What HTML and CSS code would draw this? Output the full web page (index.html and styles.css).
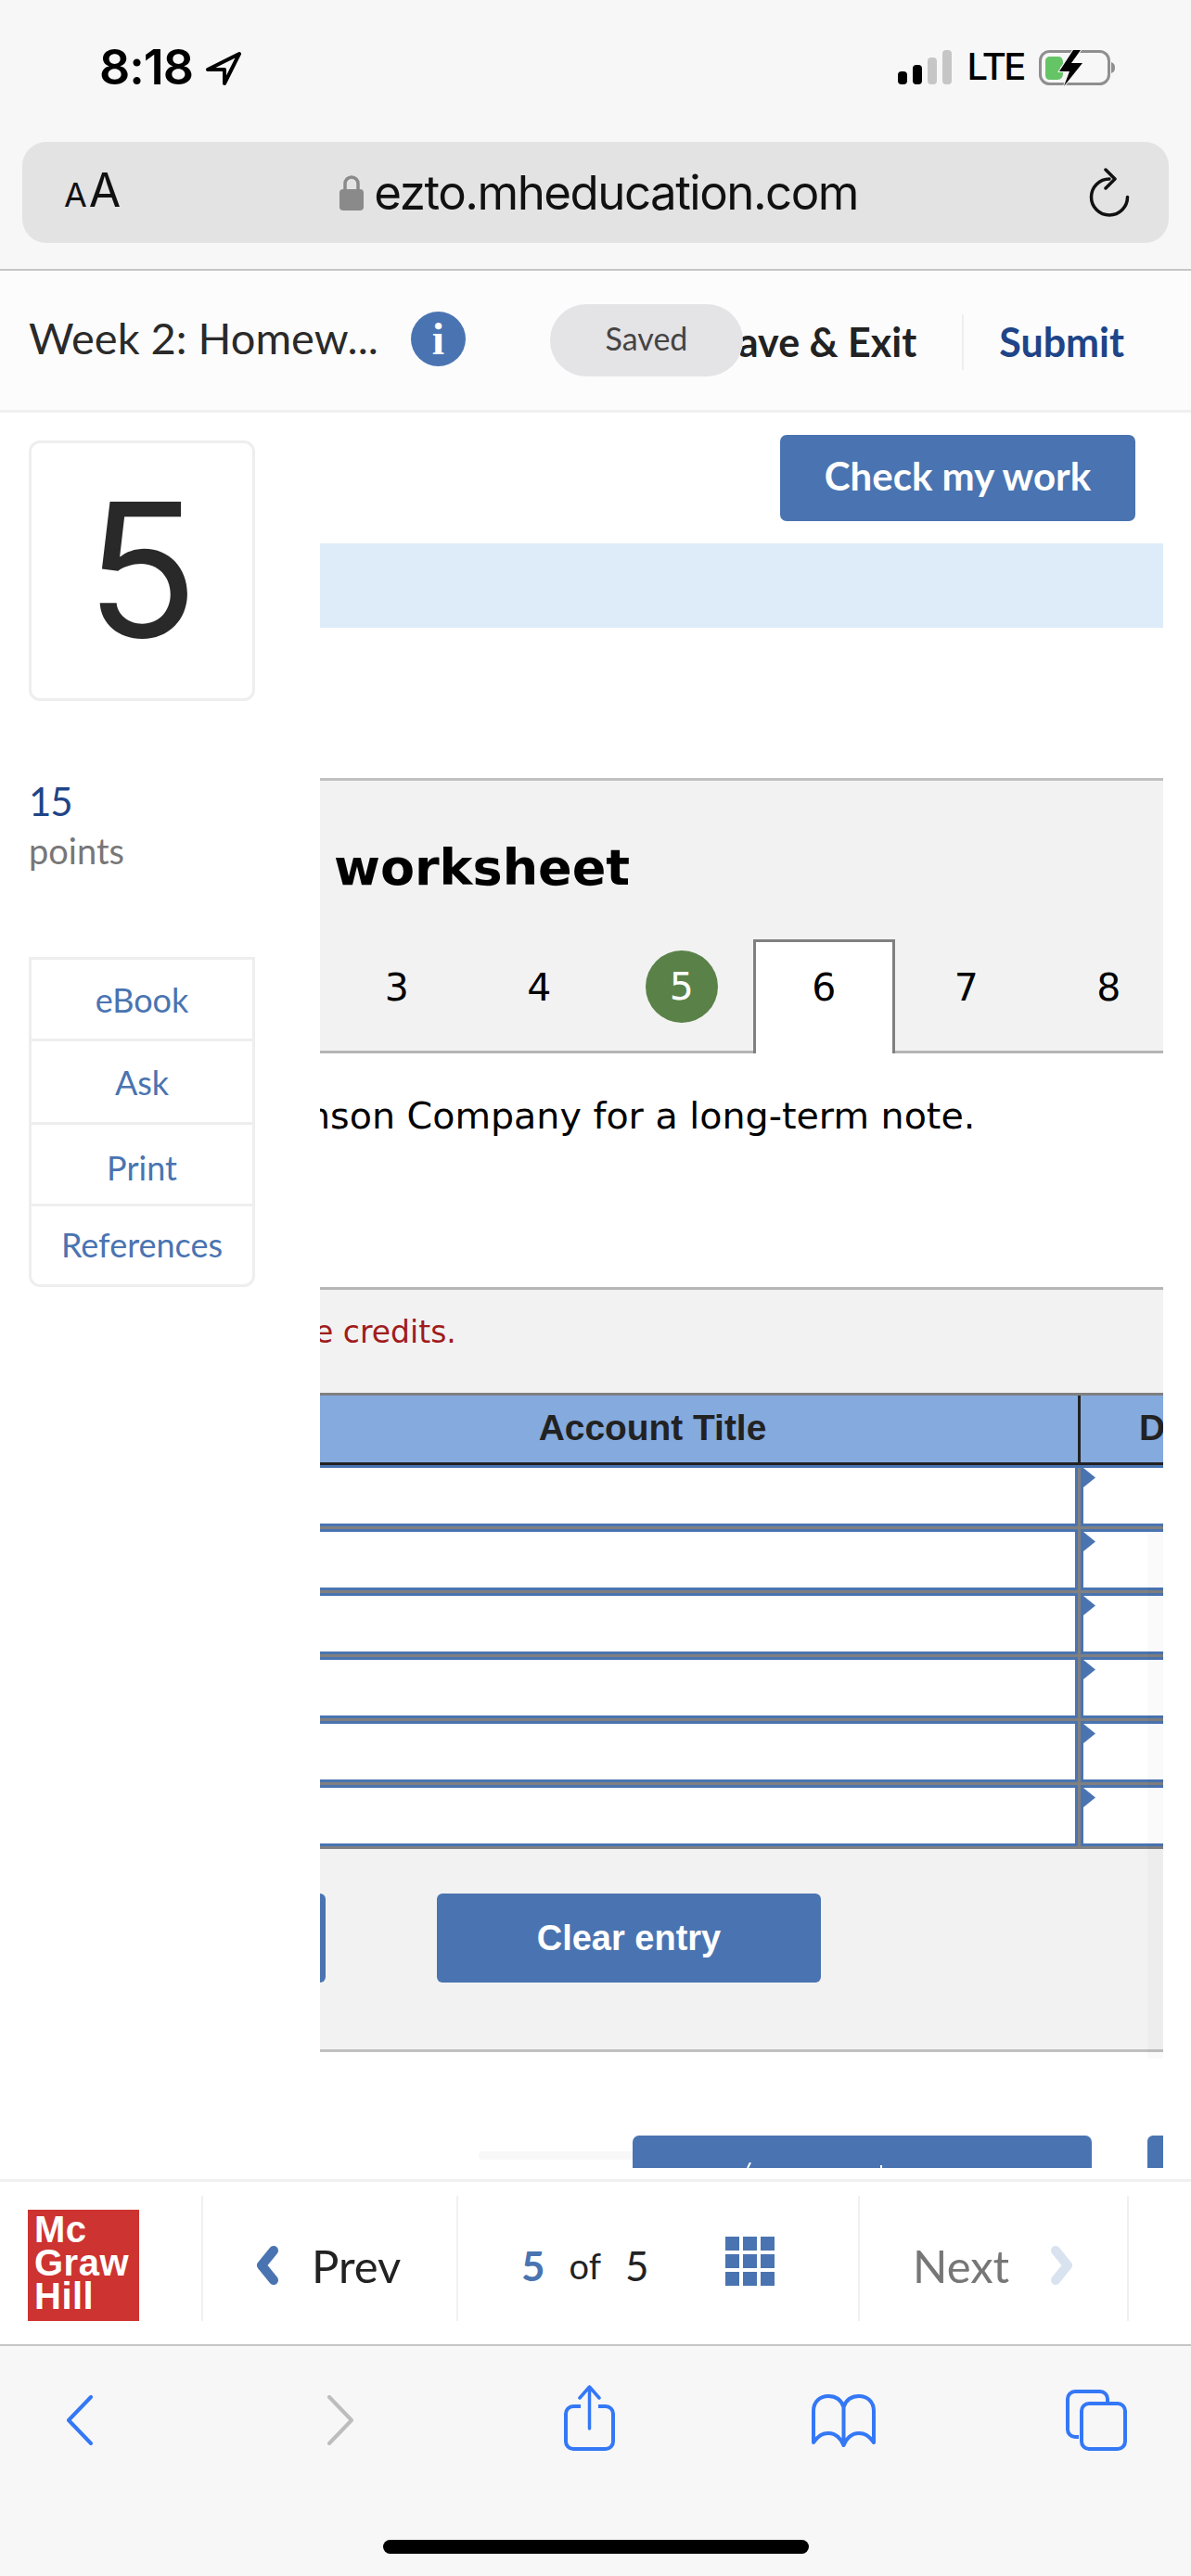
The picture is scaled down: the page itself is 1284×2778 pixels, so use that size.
FILE: index.html
```html
<!DOCTYPE html>
<html lang="en">
<head>
<meta charset="utf-8">
<title>Week 2: Homework</title>
<link rel="stylesheet" href="styles.css">
</head>
<body>
<div class="phone">
  <div class="chrome-top">
    <div class="status">
      <span class="time">8:18</span>
      <svg class="loc" viewBox="0 0 40 37"><path d="M37 3 3 20h18v15z" fill="none" stroke="#000" stroke-width="4" stroke-linejoin="round"/></svg>
      <div class="status-right">
        <div class="signal"><i class="b1"></i><i class="b2"></i><i class="b3"></i><i class="b4"></i></div>
        <span class="lte">LTE</span>
        <svg class="battery" viewBox="0 0 82 40">
          <rect x="1.500" y="2.500" width="74" height="35" rx="10" fill="none" stroke="#8f8f8f" stroke-width="3"/>
          <path d="M12 8h9c4 0 5 3 5 7 0 3-3 4-3 5 0 2 3 3 3 6 0 4-2 7-6 7h-8c-3 0-5-2-5-5V13c0-3 2-5 5-5z" fill="#65c466"/>
          <path d="M37 1 22 24h11l-6 16 20-25H35l10-14z" fill="#000" stroke="#f7f7f7" stroke-width="2" paint-order="stroke"/>
          <path d="M78 14c3 1 4 3 4 6s-1 5-4 6z" fill="#8f8f8f"/>
        </svg>
      </div>
    </div>
    <div class="urlbar">
      <span class="aa"><small>A</small>A</span>
      <span class="url">
        <svg class="lock" viewBox="0 0 26 38"><path d="M6 16V9a7 7 0 0 1 14 0v7" fill="none" stroke="#8a8a8a" stroke-width="3.500"/><rect y="15" width="26" height="23" rx="4" fill="#8a8a8a"/></svg>
        <span class="host">ezto.mheducation.com</span>
      </span>
      <svg class="reload" viewBox="0 0 44 54"><path d="M22 12A19.500 19.500 0 1 0 41.500 31.500" fill="none" stroke="#111" stroke-width="3.500" stroke-linecap="round"/><path d="M18 2l10 10-10 10" fill="none" stroke="#111" stroke-width="3.500" stroke-linecap="round" stroke-linejoin="round"/></svg>
    </div>
  </div>

  <header class="app-head">
    <span class="title">Week 2: Homew...</span>
    <span class="info">i</span>
    <span class="save">Save &amp; Exit</span>
    <span class="submit">Submit</span>
    <span class="saved-pill">Saved</span>
  </header>

  <main class="main">
    <aside class="side">
      <div class="qcard">5</div>
      <div class="pts"><b>15</b><span>points</span></div>
      <nav class="links">
        <a>eBook</a>
        <a>Ask</a>
        <a class="print">Print</a>
        <a>References</a>
      </nav>
    </aside>

    <section class="content">
      <div class="check-row"><button class="btn check">Check my work</button></div>
      <div class="band"></div>

      <div class="tabs-panel">
        <h2 class="ws-title">worksheet</h2>
        <div class="tabs">
          <span class="tab">3</span>
          <span class="tab">4</span>
          <span class="tab"><em class="done">5</em></span>
          <span class="tab active">6</span>
          <span class="tab">7</span>
          <span class="tab">8</span>
        </div>
      </div>

      <p class="prompt">nson Company for a long-term note.</p>

      <div class="entry-panel">
        <p class="note">e credits.</p>
        <div class="thead">
          <div class="th-title">Account Title</div>
          <div class="th-debit">Debit</div>
        </div>
        <div class="row"><div class="c-title"></div><div class="c-rule"></div><div class="c-debit"><i class="flag"></i></div></div><div class="line"></div>
        <div class="row"><div class="c-title"></div><div class="c-rule"></div><div class="c-debit"><i class="flag"></i></div></div><div class="line"></div>
        <div class="row"><div class="c-title"></div><div class="c-rule"></div><div class="c-debit"><i class="flag"></i></div></div><div class="line"></div>
        <div class="row"><div class="c-title"></div><div class="c-rule"></div><div class="c-debit"><i class="flag"></i></div></div><div class="line"></div>
        <div class="row"><div class="c-title"></div><div class="c-rule"></div><div class="c-debit"><i class="flag"></i></div></div><div class="line"></div>
        <div class="row"><div class="c-title"></div><div class="c-rule"></div><div class="c-debit"><i class="flag"></i></div></div><div class="line last"></div>
        <div class="entry-actions">
          <span class="btn stub"></span>
          <button class="btn clear">Clear entry</button>
        </div>
      </div>

      <div class="scroll-shade"></div>

      <div class="pager-clip">
        <span class="faint"></span>
        <span class="btn big"><svg class="tick" viewBox="0 0 160 6"><path d="M5 0 2 6M146 3v3" fill="none" stroke="#fff" stroke-width="2"/></svg></span>
        <span class="btn stub2"></span>
      </div>
    </section>
  </main>

  <footer class="foot">
    <div class="logo"><span>Mc</span><span>Graw</span><span>Hill</span></div>
    <div class="f-cell f-prev">
      <svg class="chev" viewBox="0 0 26 42"><path d="M20 5 7 21l13 16" fill="none" stroke="#4a74b1" stroke-width="10" stroke-linecap="round" stroke-linejoin="round"/></svg>
      <span>Prev</span>
    </div>
    <div class="f-cell f-count">
      <b>5</b><span class="of">of</span><span>5</span>
      <div class="grid-ic"><i></i><i></i><i></i><i></i><i></i><i></i><i></i><i></i><i></i></div>
    </div>
    <div class="f-cell f-next">
      <span>Next</span>
      <svg class="chev" viewBox="0 0 26 42"><path d="M6 5l13 16L6 37" fill="none" stroke="#d9e3f0" stroke-width="10" stroke-linecap="round" stroke-linejoin="round"/></svg>
    </div>
  </footer>

  <div class="toolbar">
    <div class="tools">
      <svg class="t-back" viewBox="0 0 30 54"><path d="M27 2 3 27l24 25" fill="none" stroke="#3478f6" stroke-width="4" stroke-linecap="round" stroke-linejoin="round"/></svg>
      <svg class="t-fwd" viewBox="0 0 30 54"><path d="M3 2l24 25L3 52" fill="none" stroke="#bdbdbd" stroke-width="4" stroke-linecap="round" stroke-linejoin="round"/></svg>
      <svg class="t-share" viewBox="0 0 55 71"><path d="M18 23H10a8 8 0 0 0-8 8v30a8 8 0 0 0 8 8h35a8 8 0 0 0 8-8V31a8 8 0 0 0-8-8h-8" fill="none" stroke="#3478f6" stroke-width="4"/><path d="M27.500 2v45M17 14 27.500 2 38 14" fill="none" stroke="#3478f6" stroke-width="3.500" stroke-linecap="round" stroke-linejoin="round"/></svg>
      <svg class="t-book" viewBox="0 0 69 57"><path d="M34.500 14C32 6 26 2 18 2 9 2 2 8 2 18v34c6-8 10-10 16-10 8 0 14 6 16.500 13C37 48 43 42 51 42c6 0 10 2 16 10V18C67 8 60 2 51 2 43 2 37 6 34.500 14v41" fill="none" stroke="#3478f6" stroke-width="4" stroke-linejoin="round"/></svg>
      <svg class="t-tabs" viewBox="0 0 66 66"><path d="M14 51H10a8 8 0 0 1-8-8V10a8 8 0 0 1 8-8h27a8 8 0 0 1 8 8v4" fill="none" stroke="#3478f6" stroke-width="4"/><rect x="17" y="15" width="47" height="49" rx="8" fill="none" stroke="#3478f6" stroke-width="4"/></svg>
    </div>
    <div class="home"></div>
  </div>
</div>
</body>
</html>
```
FILE: styles.css
```css
* { box-sizing: border-box; }
html, body { margin: 0; padding: 0; background: #fff; }
.phone { width: 1284px; height: 2778px; overflow: hidden; font-family: "Lato", "Liberation Sans", sans-serif; display: flex; flex-direction: column; }

/* browser chrome */
.chrome-top { height: 292px; background: #f7f7f7; border-bottom: 2px solid #c6c6c6; padding: 0 24px; }
.status { height: 153px; display: flex; align-items: flex-start; padding-top: 47px; position: relative; }
.time { margin-left: 83px; font: 600 52px/52px "Inter", sans-serif; color: #000; letter-spacing: -1px; }
.loc { width: 40px; height: 37px; margin: 8px 0 0 13px; }
.status-right { margin-left: auto; margin-top: 6px; display: flex; align-items: flex-end; padding-right: 58px; }
.signal { display: flex; align-items: flex-end; gap: 6px; height: 37px; }
.signal i { display: block; width: 10px; border-radius: 4px; background: #000; }
.signal .b1 { height: 14px; } .signal .b2 { height: 21px; }
.signal .b3 { height: 29px; background: #c6c6c6; } .signal .b4 { height: 37px; background: #c6c6c6; }
.lte { font: 500 40px/38px "Inter", sans-serif; margin-left: 16px; color: #000; letter-spacing: -2.500px; }
.battery { width: 82px; height: 40px; margin-left: 16px; margin-bottom: -2px; }

.urlbar { height: 109px; background: #e3e3e3; border-radius: 26px; display: flex; align-items: center; padding: 0 42px 0 45px; position: relative; }
.aa { font: 400 50px/56px "Inter", sans-serif; color: #111; }
.aa small { font-size: 36px; margin-right: 2px; }
.url { display: flex; align-items: center; margin-left: 236px; }
.lock { width: 26px; height: 38px; margin-right: 11px; }
.host { font: 400 51px/56px "Inter", sans-serif; color: #111; letter-spacing: -1.500px; }
.reload { width: 44px; height: 54px; margin-left: auto; }

/* app header */
.app-head { height: 153px; background: #fcfcfc; border-bottom: 3px solid #f0f0f0; display: flex; align-items: center; position: relative; padding: 0 72px 0 31px; }
.title { font-size: 47px; color: #2a2a2a; margin-top: -6px; }
.info { width: 59px; height: 59px; border-radius: 50%; background: #4a74b1; color: #fff; font: 700 48px/59px "Liberation Serif", serif; text-align: center; margin: -3px 0 0 35px; }
.save { margin-left: auto; font-size: 43px; font-weight: 700; color: #222; padding-right: 49px; border-right: 2px solid #eee; line-height: 60px; margin-top: 3px; }
.submit { font-size: 43px; font-weight: 700; color: #1f4488; margin-left: 38px; margin-top: 3px; }
.saved-pill { position: absolute; left: 593px; top: 36px; width: 208px; height: 78px; border-radius: 39px; background: #e4e3e6; color: #444; font-size: 34px; line-height: 74px; text-align: center; }

/* main */
.main { height: 1905px; background: #fff; display: flex; overflow: hidden; }
.side { width: 345px; flex: none; padding: 30px 0 0 31px; }
.qcard { width: 244px; height: 281px; border: 3px solid #eee; border-radius: 12px; font: 400 200px/272px "Inter", sans-serif; text-align: center; color: #292929; }
.pts { margin-top: 84px; display: flex; flex-direction: column; }
.pts b { font-weight: 400; font-size: 42px; line-height: 48px; color: #1f4488; letter-spacing: -1px; }
.pts span { font-size: 38px; line-height: 46px; color: #777; margin-top: 6px; }
.links { margin-top: 92px; width: 244px; display: flex; flex-direction: column; border: 3px solid #eee; border-radius: 0 0 12px 12px; }
.links a { height: 88px; display: flex; align-items: center; justify-content: center; color: #4a74b1; font-size: 36px; border-bottom: 3px solid #eee; }
.links a:nth-child(2) { height: 90px; }
.links a.print { height: 88px; padding-top: 6px; }
.links a:last-child { height: 84px; border-bottom: 0; padding-bottom: 2px; }

.content { width: 909px; flex: none; position: relative; overflow: hidden; font-family: "DejaVu Sans", sans-serif; }
.btn { display: block; background: #4a74b1; border: 0; border-radius: 7px; color: #fff; font-weight: 700; padding: 0; }
.check-row { padding: 24px 30px 0 0; display: flex; justify-content: flex-end; }
.check { width: 383px; height: 93px; font: 700 42px/86px "Lato", sans-serif; padding-bottom: 6px; }
.band { height: 91px; margin-top: 24px; background: #deebf8; }

.tabs-panel { margin-top: 162px; height: 297px; background: #f2f2f2; border-top: 3px solid #c0c0c0; border-bottom: 3px solid #b5b5b5; position: relative; }
.ws-title { margin: 0; padding: 63px 0 0 15px; font-size: 54px; line-height: 62px; font-weight: 700; color: #000; }
.tabs { position: absolute; left: 6px; bottom: -3px; display: flex; height: 123px; }
.tab { width: 153.500px; display: flex; align-items: center; justify-content: center; font-size: 41px; color: #000; padding-bottom: 19px; }
.tab.active { background: #fff; border: 3px solid #808080; border-bottom: 0; padding-bottom: 22px; }
.done { width: 78px; height: 78px; border-radius: 50%; background: #5a8248; color: #fff; font-style: normal; display: flex; align-items: center; justify-content: center; margin-bottom: 2px; }

.prompt { margin: 0; height: 252px; padding-top: 44px; font-size: 39.600px; line-height: 46px; color: #000; text-indent: -14px; white-space: nowrap; }

.entry-panel { background: #f2f2f2; border-top: 3px solid #b5b5b5; border-bottom: 3px solid #c0c0c0; height: 825px; }
.note { margin: 0; height: 111px; padding-top: 26px; font-size: 33px; line-height: 40px; color: #a01c1c; text-indent: -6px; white-space: nowrap; }
.thead { height: 81px; background: #84aade; border-top: 3px solid #808080; display: flex; font: 700 38.900px/70px "Liberation Sans", sans-serif; color: #222; box-shadow: inset 0 -3px 0 #4a74b1, inset 0 -6px 0 #222; }
.th-title { width: 820px; flex: none; padding-right: 100px; text-align: center; border-right: 3px solid #222; height: 72px; color: #222; }
.th-debit { padding-left: 63px; white-space: nowrap; }

.row { height: 60px; display: flex; background: #fff; }
.c-title { width: 814px; }
.c-rule { width: 9px; background: #808080; border: solid #4a74b1; border-width: 0 3px; }
.c-debit { flex: 1; }
.flag { display: block; width: 13px; height: 21px; background: #4a74b1; clip-path: polygon(0 0, 100% 50%, 0 100%); }
.line { height: 9px; background: #808080; border: solid #4a74b1; border-width: 3px 0; position: relative; }
.line::after { content: ""; position: absolute; left: 817px; top: -3px; width: 3px; height: 9px; background: #808080; }
.line.last { height: 6px; border-bottom: 0; }
.line.last::after { height: 6px; }

.entry-actions { display: flex; padding-top: 48px; }
.stub { width: 6px; height: 96px; border-radius: 0 6px 6px 0; }
.clear { width: 414px; height: 96px; margin-left: 120px; font: 700 38px/92px "Liberation Sans", sans-serif; border-radius: 6px; }

.scroll-shade { position: absolute; right: 0; top: 1207px; width: 17px; height: 568px; background: rgba(0,0,0,.018); }

.pager-clip { height: 125px; overflow: hidden; display: flex; align-items: flex-start; padding-top: 90px; position: relative; }
.faint { width: 166px; height: 9px; margin: 17px 0 0 171px; background: #f8f8f8; border-radius: 4px 0 0 4px; flex: none; }
.big { width: 495px; height: 96px; flex: none; position: relative; }
.tick { position: absolute; left: 122px; top: 29px; width: 160px; height: 6px; }
.stub2 { width: 20px; height: 96px; margin-left: 60px; flex: none; border-radius: 6px 0 0 6px; }

/* footer */
.foot { height: 180px; background: #fff; border-top: 3px solid #f0f0f0; border-bottom: 2px solid #c6c6c6; display: flex; align-items: flex-start; padding: 15px 0 0 30px; }
.logo { width: 120px; height: 120px; margin-top: 15px; background: #cd3330; color: #fff; font: 700 40px/36px "Liberation Sans", sans-serif; display: flex; flex-direction: column; padding: 3px 0 0 7px; letter-spacing: 0.500px; }
.f-cell { height: 135px; border-left: 2px solid #f0f0f0; display: flex; align-items: center; font-size: 49px; padding-top: 14px; }
.f-prev { margin-left: 67px; width: 275px; padding-left: 56px; color: #222; }
.f-prev span { margin-left: 35px; }
.chev { width: 26px; height: 42px; }
.f-count { width: 433px; padding-left: 68px; color: #222; align-items: center; font-size: 44px; }
.f-count b { color: #4a74b1; font-size: 44px; }
.f-count .of { font-size: 38px; margin: 0 26px; }
.grid-ic { display: grid; grid-template-columns: repeat(3, 15px); grid-auto-rows: 15px; gap: 4px; margin: -8px 0 0 82px; }
.grid-ic i { background: #4a74b1; }
.f-next { width: 292px; padding-left: 57px; border-right: 2px solid #f0f0f0; color: #777; }
.f-next .chev { margin-left: 44px; }

.toolbar { flex: 1; background: #f7f7f7; position: relative; }
.tools { height: 209px; position: relative; }
.tools svg { position: absolute; }
.t-back { left: 71px; top: 53px; width: 30px; height: 54px; }
.t-fwd { left: 352px; top: 53px; width: 30px; height: 54px; }
.t-share { left: 608px; top: 42px; width: 55px; height: 71px; }
.t-book { left: 875px; top: 52px; width: 69px; height: 57px; }
.t-tabs { left: 1149px; top: 47px; width: 66px; height: 66px; }
.home { width: 459px; height: 15px; margin-left: 413px; background: #000; border-radius: 8px; }
```
